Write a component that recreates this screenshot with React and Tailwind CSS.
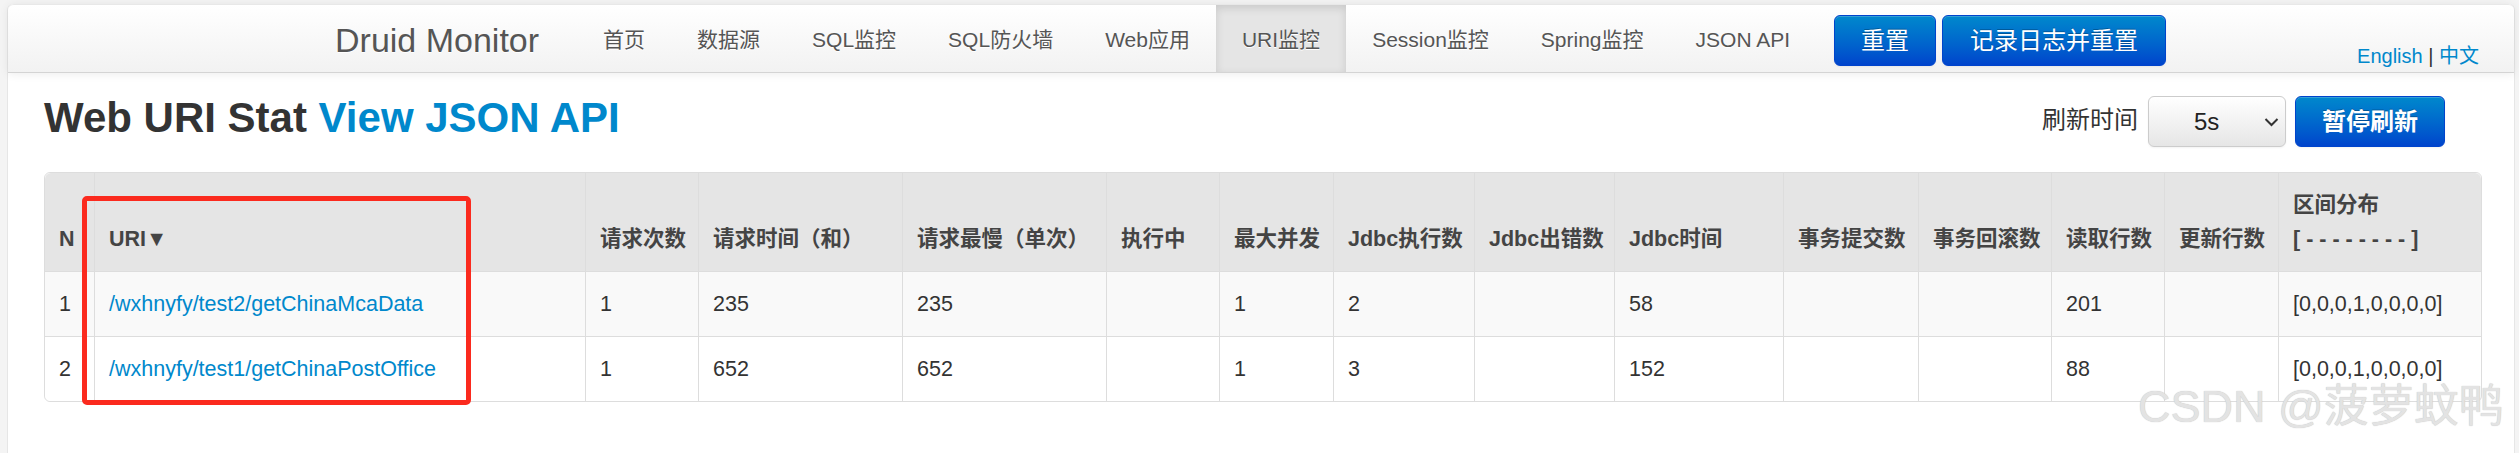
const navLinks = ['首页', '数据源', 'SQL监控', 'SQL防火墙', 'Web应用', 'URI监控', 'Session监控', 'Spring监控', 'JSON API'];

const columns = [
  { key: 'n', title: 'N', width: 'w-[49px]' },
  { key: 'uri', title: 'URI▼', width: 'w-[491px]' },
  { key: 'count', title: '请求次数', width: 'w-[113px]' },
  { key: 'time', title: '请求时间（和）', width: 'w-[204px]' },
  { key: 'max', title: '请求最慢（单次）', width: 'w-[204px]' },
  { key: 'running', title: '执行中', width: 'w-[113px]' },
  { key: 'conc', title: '最大并发', width: 'w-[114px]' },
  { key: 'jdbcExec', title: 'Jdbc执行数', width: 'w-[141px]' },
  { key: 'jdbcErr', title: 'Jdbc出错数', width: 'w-[140px]' },
  { key: 'jdbcTime', title: 'Jdbc时间', width: 'w-[169px]' },
  { key: 'commit', title: '事务提交数', width: 'w-[135px]' },
  { key: 'rollback', title: '事务回滚数', width: 'w-[133px]' },
  { key: 'fetch', title: '读取行数', width: 'w-[113px]' },
  { key: 'update', title: '更新行数', width: 'w-[114px]' },
  { key: 'hist', title: 'hist', width: 'w-[203px]' },
];

const rows = [
  {
    n: 1, uri: '/wxhnyfy/test2/getChinaMcaData', count: 1, time: 235, max: 235, running: '', conc: 1,
    jdbcExec: 2, jdbcErr: '', jdbcTime: 58, commit: '', rollback: '', fetch: 201, update: '', hist: '[0,0,0,1,0,0,0,0]',
  },
  {
    n: 2, uri: '/wxhnyfy/test1/getChinaPostOffice', count: 1, time: 652, max: 652, running: '', conc: 1,
    jdbcExec: 3, jdbcErr: '', jdbcTime: 152, commit: '', rollback: '', fetch: 88, update: '', hist: '[0,0,0,1,0,0,0,0]',
  },
];

const btnPrimary =
  'rounded-[6px] border border-[#0044cc] bg-gradient-to-b from-[#0088cc] to-[#0044cc] text-white [text-shadow:0_-1px_0_rgba(0,0,0,0.25)] shadow-[inset_0_1px_0_rgba(255,255,255,0.2),0_1px_2px_rgba(0,0,0,0.05)]';

export default function App() {
  return (
    <div className="relative w-[2519px] h-[453px] overflow-hidden bg-[#f4f4f4] pt-[4px] pl-[7px] pr-[4px] font-['Liberation_Sans','Noto_Sans_CJK_SC',sans-serif] text-[#333]">
      <div className="h-full bg-white rounded-t-[6px] border-x border-[#e6e6e6]">
        {/* Navbar */}
        <div className="h-[69px] flex items-stretch rounded-t-[6px] border-t border-[#e8e8e8] border-b border-b-[#d4d4d4] bg-gradient-to-b from-white to-[#f2f2f2] shadow-[0_1px_10px_rgba(0,0,0,0.08)] pl-[327px] pr-[35px]">
          <div className="flex items-center pt-[4px] mr-[38px] text-[34px] text-[#555] [text-shadow:0_1px_0_#fff]">Druid Monitor</div>
          {navLinks.map((l) => (
            <div
              key={l}
              className={
                l === 'URI监控'
                  ? 'flex items-center px-[26px] pt-[3px] text-[21px] text-[#555] bg-[#e5e5e5] shadow-[inset_0_3px_8px_rgba(0,0,0,0.125)] [text-shadow:0_1px_0_#fff]'
                  : 'flex items-center px-[26px] pt-[3px] text-[21px] text-[#555] [text-shadow:0_1px_0_#fff]'
              }
            >
              {l}
            </div>
          ))}
          <div className="flex items-start gap-[6px] ml-[18px] mt-[10px]">
            <button className={`${btnPrimary} h-[51px] px-[26px] text-[24px]`}>重置</button>
            <button className={`${btnPrimary} h-[51px] px-[27px] text-[24px]`}>记录日志并重置</button>
          </div>
          <div className="ml-auto mt-[39px] text-[20px] leading-[24px] whitespace-nowrap">
            <span className="text-[#0088cc]">English</span>
            <span className="text-[#333]"> | </span>
            <span className="text-[#0088cc]">中文</span>
          </div>
        </div>

        {/* Title row */}
        <div className="flex items-center h-[51px] mt-[23px] pl-[36px] pr-[69px]">
          <h1 className="-mt-[7px] text-[42px] leading-[46px] font-bold text-[#333] whitespace-nowrap">
            Web URI Stat <span className="text-[#0088cc]">View JSON API</span>
          </h1>
          <div className="ml-auto flex items-center">
            <span className="-mt-[4px] text-[24px] text-[#333] mr-[10px]">刷新时间</span>
            <div className="relative w-[138px] h-[51px] rounded-[6px] border border-[#ccc] bg-gradient-to-b from-white to-[#e6e6e6] shadow-[0_1px_2px_rgba(0,0,0,0.05)] flex items-center">
              <span className="absolute left-[45px] text-[24px] text-[#222]">5s</span>
              <svg className="absolute left-[115px] top-[20px]" width="15" height="10" viewBox="0 0 15 10">
                <path d="M1.5 2 L7.5 8 L13.5 2" fill="none" stroke="#333" strokeWidth="2" />
              </svg>
            </div>
            <button className={`${btnPrimary} ml-[9px] h-[51px] px-[26px] text-[24px] font-bold`}>暂停刷新</button>
          </div>
        </div>

        {/* Table */}
        <div className="px-[36px] mt-[25px]">
          <table className="w-full table-fixed border-separate border-spacing-0 border border-[#ddd] rounded-[6px] text-[21.5px] leading-[34px]">
            <colgroup>
              {columns.map((c) => (
                <col key={c.key} className={c.width} />
              ))}
            </colgroup>
            <thead>
              <tr>
                {columns.map((c, i) => (
                  <th
                    key={c.key}
                    className={
                      'bg-[#e5e5e5] text-left align-bottom font-bold text-[#444] px-[14px] py-[15px] whitespace-nowrap ' +
                      (i === 0 ? 'rounded-tl-[6px] ' : 'border-l border-[#ddd] ') +
                      (i === columns.length - 1 ? 'rounded-tr-[6px]' : '')
                    }
                  >
                    {c.key === 'hist' ? (
                      <>
                        区间分布
                        <br />[ - - - - - - - - ]
                      </>
                    ) : (
                      c.title
                    )}
                  </th>
                ))}
              </tr>
            </thead>
            <tbody>
              {rows.map((r, ri) => (
                <tr key={r.n} className={ri % 2 === 0 ? 'bg-[#f9f9f9]' : 'bg-white'}>
                  {columns.map((c, i) => (
                    <td
                      key={c.key}
                      className={
                        'border-t border-[#ddd] px-[14px] py-[15px] align-middle whitespace-nowrap ' +
                        (i === 0 ? '' : 'border-l ') +
                        (ri === rows.length - 1 && i === 0 ? 'rounded-bl-[6px] ' : '') +
                        (ri === rows.length - 1 && i === columns.length - 1 ? 'rounded-br-[6px]' : '')
                      }
                    >
                      {c.key === 'uri' ? <span className="text-[#0088cc]">{r.uri}</span> : r[c.key]}
                    </td>
                  ))}
                </tr>
              ))}
            </tbody>
          </table>
        </div>
      </div>

      {/* Annotation box */}
      <div className="absolute left-[82px] top-[196px] w-[389px] h-[209px] border-[5px] border-[#fb2a1e] rounded-[5px]" />

      {/* Watermark */}
      <div className="absolute left-[2138px] top-[384px] text-[45px] leading-[46px] whitespace-nowrap text-[#e3e3e3] [text-shadow:0_0_1px_#b8b8b8]">
        CSDN @菠萝蚊鸭
      </div>
    </div>
  );
}
